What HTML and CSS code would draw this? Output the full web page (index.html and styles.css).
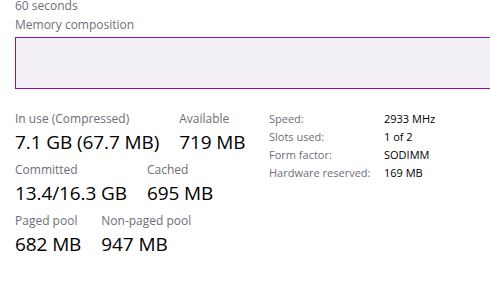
FILE: index.html
```html
<!DOCTYPE html>
<html lang="en">
<head>
  <meta charset="UTF-8" />
  <title>Memory</title>
  <link rel="stylesheet" href="styles.css">
</head>
<body>
  <main class="panel">
    <div class="axis-label">60 seconds</div>
    <div class="axis-label comp-title">Memory composition</div>
    <div class="composition"></div>

    <section class="details">
      <div class="stats">
        <div class="stat-row">
          <div class="stat">
            <div class="stat-label">In use (Compressed)</div>
            <div class="stat-value">7.1 GB (67.7 MB)</div>
          </div>
          <div class="stat">
            <div class="stat-label">Available</div>
            <div class="stat-value">719 MB</div>
          </div>
        </div>
        <div class="stat-row">
          <div class="stat">
            <div class="stat-label">Committed</div>
            <div class="stat-value">13.4/16.3 GB</div>
          </div>
          <div class="stat">
            <div class="stat-label">Cached</div>
            <div class="stat-value">695 MB</div>
          </div>
        </div>
        <div class="stat-row">
          <div class="stat">
            <div class="stat-label">Paged pool</div>
            <div class="stat-value">682 MB</div>
          </div>
          <div class="stat">
            <div class="stat-label">Non-paged pool</div>
            <div class="stat-value">947 MB</div>
          </div>
        </div>
      </div>

      <dl class="hw">
        <dt>Speed:</dt><dd>2933 MHz</dd>
        <dt>Slots used:</dt><dd>1 of 2</dd>
        <dt>Form factor:</dt><dd>SODIMM</dd>
        <dt>Hardware reserved:</dt><dd>169 MB</dd>
      </dl>
    </section>

    <a href="#" class="monitor-link">Monitor</a>
  </main>
</body>
</html>
```

FILE: styles.css
```css
body, html {
  margin: 0;
  padding: 0;
  background: #fff;
  overflow: hidden;
  font-family: 'Open Sans', 'Noto Sans', sans-serif;
  color: #000;
}
.panel {
  padding-left: 15px;
  margin-top: -4px;
}
.axis-label {
  font-size: 12px;
  line-height: 19px;
  color: #6e6e78;
}
.composition {
  margin-top: 3px;
  margin-right: -20px;
  height: 50px;
  border: 1px solid #8b12ae;
  background: #f2f0f4;
}
.details {
  display: flex;
  margin-top: 22px;
}
.stats {
  width: 254px;
}
.stat-row {
  display: flex;
  gap: 20px;
  height: 51px;
}
.stat-label {
  font-size: 12px;
  line-height: 16px;
  color: #6e6e78;
}
.stat-value {
  margin-top: 2px;
  font-size: 19px;
  line-height: 26px;
  letter-spacing: -0.1px;
}
.hw {
  display: grid;
  grid-template-columns: 115px auto;
  grid-auto-rows: 18px;
  margin: 0;
  font-size: 11px;
}
.hw dt {
  color: #6e6e78;
}
.hw dd {
  margin: 0;
}
.monitor-link {
  display: block;
  margin-left: -15px;
  margin-top: 32px;
  font-size: 12px;
  color: #0066cc;
  text-decoration: none;
}
```
